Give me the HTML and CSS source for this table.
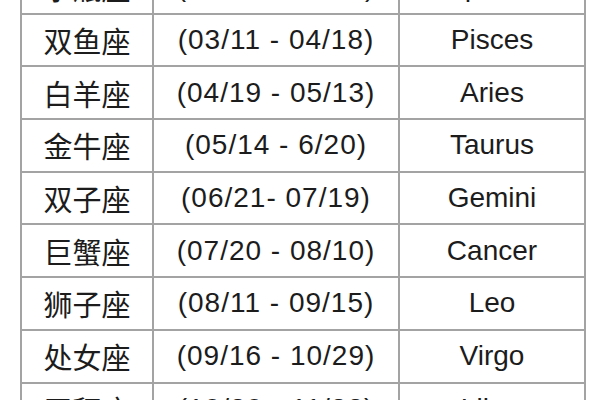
FILE: index.html
```html
<!DOCTYPE html>
<html lang="zh">
<head>
<meta charset="utf-8">
<title>星座</title>
<link rel="stylesheet" href="styles.css">
</head>
<body>
<div class="page">
  <div class="table">
    <div class="cell cn">水瓶座</div><div class="cell date">(01/20 - 03/10)</div><div class="cell en">Aquarius</div>
    <div class="cell cn">双鱼座</div><div class="cell date">(03/11 - 04/18)</div><div class="cell en">Pisces</div>
    <div class="cell cn">白羊座</div><div class="cell date">(04/19 - 05/13)</div><div class="cell en">Aries</div>
    <div class="cell cn">金牛座</div><div class="cell date">(05/14 - 6/20)</div><div class="cell en">Taurus</div>
    <div class="cell cn">双子座</div><div class="cell date">(06/21- 07/19)</div><div class="cell en">Gemini</div>
    <div class="cell cn">巨蟹座</div><div class="cell date">(07/20 - 08/10)</div><div class="cell en">Cancer</div>
    <div class="cell cn">狮子座</div><div class="cell date">(08/11 - 09/15)</div><div class="cell en">Leo</div>
    <div class="cell cn">处女座</div><div class="cell date">(09/16 - 10/29)</div><div class="cell en">Virgo</div>
    <div class="cell cn">天秤座</div><div class="cell date">(10/30 - 11/22)</div><div class="cell en">Libra</div>
  </div>
</div>
</body>
</html>
```
FILE: styles.css
```css
html, body {
  margin: 0;
  padding: 0;
  background: #ffffff;
}
body {
  width: 600px;
  height: 400px;
  overflow: hidden;
}
.page {
  padding-left: 20px;
}
.table {
  margin-top: -40px;
  width: 566px;
  box-sizing: border-box;
  display: grid;
  grid-template-columns: 130px 244px 184px;
  grid-auto-rows: 50.7px;
  gap: 2px;
  padding: 2px;
  background: #a3a3a3;
}
.cell {
  background: #ffffff;
  display: flex;
  align-items: center;
  justify-content: center;
  color: #1c1c1c;
  font-family: "Liberation Sans", Arial, "Noto Sans CJK SC", sans-serif;
  font-size: 28px;
  white-space: nowrap;
}
.cn {
  font-family: "Noto Sans CJK SC", "Liberation Sans", sans-serif;
  font-size: 29px;
  font-weight: 400;
}
.date {
  letter-spacing: 1px;
}
```
